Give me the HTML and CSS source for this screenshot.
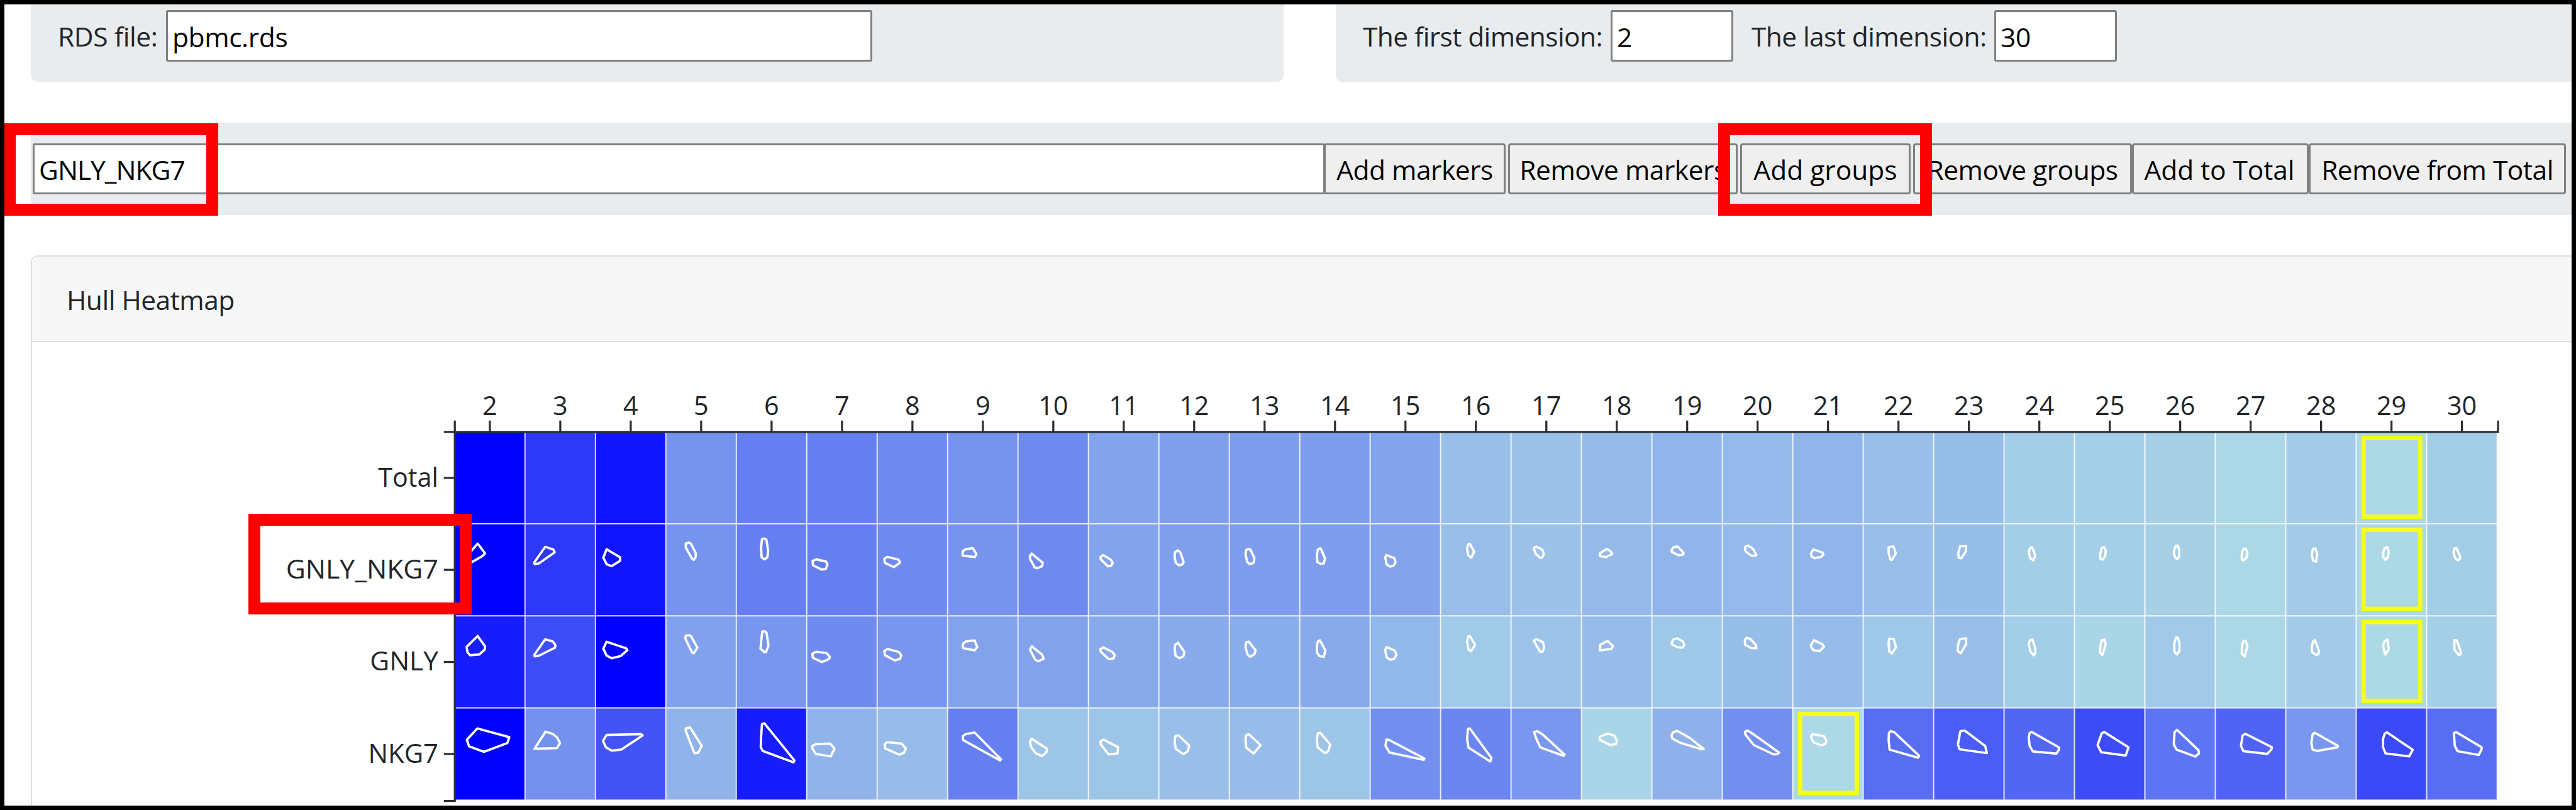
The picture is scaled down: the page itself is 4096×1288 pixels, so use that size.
FILE: index.html
```html
<!DOCTYPE html>
<html lang="en">
<head>
<meta charset="utf-8">
<title>Hull Heatmap</title>
<link rel="stylesheet" href="styles.css">
</head>
<body>
<div class="page">
  <div class="settings">
    <section class="panel panel-file">
      <label class="t-rds" for="rds">RDS file:</label>
      <input class="field field-file" id="rds" value="pbmc.rds">
    </section>
    <section class="panel panel-dims">
      <label class="t-first" for="first">The first dimension:</label>
      <input class="field field-num" id="first" value="2">
      <label class="t-last" for="last">The last dimension:</label>
      <input class="field field-num" id="last" value="30">
    </section>
  </div>

  <div class="toolbar">
    <input class="field field-marker" value="GNLY_NKG7">
    <button class="btn spaced">Add markers</button>
    <button class="btn spaced">Remove markers</button>
    <button class="btn spaced btn-groups">Add groups</button>
    <button class="btn">Remove groups</button>
    <button class="btn btn-total">Add to Total</button>
    <button class="btn">Remove from Total</button>
  </div>

  <section class="card">
    <header class="card-header">Hull Heatmap</header>
    <div class="card-body">
      <svg class="chart" id="chart" viewBox="56 586 4351 795" preserveAspectRatio="none"></svg>
    </div>
  </section>
</div>
<div class="mark mark-input"></div>
<div class="mark mark-button"></div>
<div class="mark mark-row"></div>
<div class="frame"></div>
<script src="chart.js"></script>
</body>
</html>
```
FILE: styles.css
```css
* { box-sizing: border-box; }

body {
  margin: 0;
  width: 4096px;
  height: 1288px;
  overflow: hidden;
  position: relative;
  background: #fff;
  color: #212529;
  font: 42.5px/60px "Open Sans", "Noto Sans", sans-serif;
}

.page {
  display: flex;
  flex-direction: column;
  padding-left: 49px;
}

.settings {
  display: flex;
  height: 130px;
}

.panel {
  display: flex;
  align-items: flex-start;
  padding-top: 16px;
  background: #e9ecef;
  white-space: nowrap;
}

.panel label {
  flex: none;
  padding-top: 12px;
}

.panel-file {
  width: 1992px;
  padding-left: 43px;
  margin-right: 83px;
  border-radius: 0 0 10px 10px;
}

.panel-dims {
  flex: 1;
  padding-left: 43px;
  border-radius: 0 0 0 10px;
}

.t-rds { width: 172px; letter-spacing: -0.4px; }
.t-first { width: 394px; letter-spacing: -0.6px; }
.t-last { width: 386px; margin-left: 29px; letter-spacing: -0.6px; }

.field {
  display: block;
  height: 82px;
  margin: 0;
  padding: 2px 7px 0;
  border: 3px solid #808080;
  border-radius: 3px;
  background: #fff;
  color: #000;
  font: inherit;
  letter-spacing: -0.4px;
  outline: 0;
}

.field-file { width: 1123px; }
.field-num { width: 195px; }

.toolbar {
  display: grid;
  grid-template-columns: 2053px 293px 369px 275px 348px 281px 409px;
  align-items: center;
  height: 147px;
  margin-top: 65px;
  padding: 0 0 0 3px;
  background: #e9ecef;
}

.field-marker {
  width: 2055px;
  height: 81px;
  letter-spacing: -1px;
}

.btn {
  height: 81px;
  margin: 0;
  padding: 3px 0 0;
  border: 3px solid #808080;
  border-radius: 4px;
  background: #efefef;
  color: #000;
  font: inherit;
  letter-spacing: -0.5px;
  white-space: nowrap;
}

.btn-groups { letter-spacing: 0; }
.btn-total { padding-right: 3px; letter-spacing: -0.1px; }
.btn.spaced { margin-right: 4px; }

.card {
  height: 900px;
  margin-top: 64px;
  border: 2px solid #dfdfdf;
  border-right: 0;
  border-radius: 10px 0 0 0;
}

.card-header {
  height: 136px;
  padding: 39px 0 0 55px;
  border-bottom: 2px solid #dfdfdf;
  background: #f7f7f7;
  border-radius: 10px 0 0 0;
  letter-spacing: -0.5px;
}

.chart {
  display: block;
  width: 4038px;
  height: 738px;
}

.chart text {
  font-size: 45.5px;
  fill: #212529;
}

.axis {
  fill: none;
  stroke: #2b2f33;
  stroke-width: 3.5;
}

.cell {
  stroke: #fff;
  stroke-opacity: 0.65;
  stroke-width: 2.2;
}

.hull {
  fill: none;
  stroke: #fff;
  stroke-width: 4;
  stroke-linejoin: round;
}

.best {
  fill: none;
  stroke: #f5ff1e;
  stroke-width: 7.5;
}

.mark {
  position: absolute;
  border: 19px solid #f00;
}

.mark-input { left: 6px; top: 196px; width: 341px; height: 147px; }
.mark-button { left: 2732px; top: 196px; width: 340px; height: 147px; }
.mark-row { left: 395px; top: 817px; width: 355px; height: 160px; }

.frame {
  position: absolute;
  inset: 0;
  border: 7px solid #000;
}
```
FILE: chart.js
```js
const LEFT = 780, TOP = 739.6, CW = 120.67, RH = 157.7;

// Position between blue (0) and light blue (1) for every row and dimension.
const total = [0, .26, .09, .68, .59, .59, .64, .68, .64, .76, .735, .73, .73, .76, .88, .9, .86, .84, .855, .84, .88, .875, .95, .955, .965, .995, .94, 1, .945];
const rows = [
  { name: "Total", width: 103, values: total, best: 27 },
  { name: "GNLY_NKG7", width: 261, values: total, best: 27 },
  { name: "GNLY", width: 117, best: 27, values: [.13, .36, 0, .745, .695, .645, .695, .75, .75, .785, .79, .8, .785, .845, .93, .905, .87, .925, .875, .87, .925, .885, .95, .985, .935, .995, .94, 1, .955] },
  { name: "NKG7", width: 120, best: 19, values: [0, .67, .385, .83, .13, .83, .87, .585, .91, .91, .88, .87, .91, .66, .62, .70, .98, .82, .66, 1, .505, .43, .47, .35, .54, .46, .7, .34, .51] }
];

// Hull outlines, grouped in bands of dimensions that share an origin and a scale.
const bands = [
  { x: 400, k: 1.96, hulls: [
    "822,584 847,620 838,630 797,656 788,652 786,630",
    "1049,596 1076,606 1081,616 1028,657 1014,660 1012,654",
    "1255,605 1301,635 1300,648 1272,667 1256,661 1244,636",
    "822,925 847,963 846,975 828,993 797,996 788,985 785,965",
    "1049,937 1074,945 1083,958 1082,968 1029,997 1014,1000 1012,995",
    "1255,946 1320,970 1325,977 1302,999 1272,1007 1255,997 1244,972",
    "821,1266 928,1298 922,1320 843,1352 793,1332 786,1308",
    "1050,1278 1074,1286 1089,1300 1099,1320 1088,1339 1013,1341",
    "1255,1290 1371,1287 1376,1292 1304,1344 1272,1348 1253,1336 1243,1312" ] },
  { x: 1130, k: 1.96, hulls: [
    "90,584 101,580 108,585 123,618 124,632 117,644 111,639 90,598",
    "346,568 353,565 361,570 367,612 364,635 355,642 345,635 343,600",
    "516,648 528,642 561,650 566,660 561,677 547,680 517,664",
    "757,640 767,633 804,643 810,654 789,671 759,655",
    "1020,612 1030,605 1054,601 1066,622 1061,634 1020,628",
    "1252,621 1289,655 1286,668 1270,675 1262,672 1246,640 1246,630",
    "1482,635 1492,626 1518,644 1524,655 1519,665 1508,668 1484,642",
    "90,924 101,922 108,926 129,968 117,989 111,985 89,935",
    "347,908 354,907 361,912 368,960 359,985 354,984 341,972",
    "515,990 528,983 563,988 574,1002 571,1010 547,1021 517,1005",
    "757,980 768,973 806,984 814,997 809,1010 792,1015 759,996",
    "1020,960 1022,953 1031,945 1060,941 1069,966 1060,978 1022,970",
    "1252,963 1288,995 1292,1009 1275,1018 1264,1013 1246,975",
    "1482,974 1492,967 1523,984 1531,996 1526,1008 1510,1010 1484,983",
    "90,1266 104,1262 144,1330 132,1356 119,1357 90,1275",
    "346,1250 354,1247 455,1384 452,1391 348,1349 342,1335 343,1300",
    "515,1330 527,1324 575,1322 590,1340 577,1369 527,1360 516,1342",
    "758,1324 765,1317 815,1322 829,1340 823,1356 808,1363 760,1340",
    "1020,1295 1030,1287 1060,1281 1149,1380 1145,1384 1022,1309",
    "1252,1304 1303,1341 1302,1352 1287,1368 1266,1358 1250,1335 1246,1315",
    "1482,1315 1493,1307 1542,1335 1540,1358 1510,1362 1484,1325" ] },
  { x: 1860, k: 1.96, hulls: [
    "302,616 312,609 320,616 331,652 327,661 315,664 305,655 301,635",
    "541,608 548,604 556,607 569,638 566,655 553,660 545,652 539,625",
    "782,606 789,601 793,606 806,638 802,657 791,659 780,652 779,625",
    "1012,626 1039,638 1043,652 1037,665 1025,669 1013,661 1008,635",
    "1287,587 1292,584 1307,614 1297,636 1287,627 1283,602",
    "303,957 312,950 334,984 330,1000 318,1007 304,998 301,970",
    "541,948 550,946 573,978 569,992 555,1002 545,992 539,965",
    "782,945 789,941 807,978 802,1002 787,999 779,985 779,960",
    "1012,966 1040,978 1046,995 1038,1009 1026,1013 1013,1004 1008,978",
    "1287,926 1292,925 1310,957 1297,981 1288,975 1283,945",
    "303,1295 313,1291 350,1329 345,1350 331,1361 305,1342 301,1315",
    "541,1291 550,1287 590,1328 566,1358 542,1338 539,1310",
    "782,1284 790,1282 824,1326 816,1351 805,1357 781,1335 779,1305",
    "1012,1307 1020,1308 1140,1377 1137,1382 1023,1355 1009,1330",
    "1286,1268 1292,1266 1365,1375 1361,1388 1288,1337 1283,1305" ] },
  { x: 2590, k: 1.96, hulls: [
    "76,600 85,595 105,607 110,622 105,634 97,637 82,620",
    "298,620 321,604 334,612 340,622 319,634 298,630",
    "539,608 545,598 558,594 573,610 580,620 575,626 562,627 540,615",
    "786,596 795,591 812,603 824,625 821,629 806,628 787,612",
    "1007,620 1015,606 1045,616 1049,625 1040,633 1020,638 1009,632",
    "1268,597 1284,594 1292,620 1279,644 1273,642 1268,618",
    "1508,594 1528,593 1527,613 1512,638 1503,636 1502,618",
    "76,942 85,936 107,948 111,968 106,982 98,984",
    "300,957 324,943 342,962 337,973 298,978",
    "539,950 546,937 558,934 577,945 582,958 575,968 558,966 540,956",
    "785,940 790,932 803,935 822,958 824,970 806,969 786,957",
    "1007,958 1017,941 1045,955 1051,964 1036,981 1015,977 1007,965",
    "1269,935 1285,936 1293,966 1279,989 1270,982 1268,955",
    "1507,937 1528,933 1528,955 1510,989 1500,980 1501,958",
    "77,1280 88,1276 106,1288 180,1363 176,1367 98,1336 85,1305",
    "298,1297 325,1285 346,1292 356,1311 352,1323 334,1328 298,1308",
    "539,1290 545,1279 558,1275 600,1301 647,1342 641,1343 570,1320 541,1303",
    "786,1278 795,1274 812,1286 900,1355 895,1361 882,1362 815,1327 787,1289",
    "1007,1296 1013,1287 1050,1294 1059,1311 1055,1324 1040,1328 1015,1317",
    "1269,1282 1275,1276 1287,1280 1370,1367 1367,1374 1271,1344 1268,1310" ] },
  { x: 3320, k: 1.4333, hulls: [
    "228,601 233,597 241,627 236,646 228,637 225,612",
    "404,600 410,597 414,610 413,628 407,643 401,641 400,625",
    "586,592 591,591 595,610 594,632 590,641 584,635 581,615",
    "751,605 757,602 762,615 760,635 753,646 748,643 748,625",
    "923,603 929,602 933,622 931,651 923,646 920,625",
    "1098,602 1106,597 1109,615 1107,635 1101,644 1096,635 1095,618",
    "1270,603 1275,600 1284,630 1284,641 1278,646 1271,635 1268,615",
    "228,940 234,938 241,970 241,990 237,996 229,982 225,955",
    "404,941 411,938 414,955 406,995 400,987 401,960",
    "586,931 591,930 595,950 595,980 589,993 583,985 582,955",
    "751,945 757,942 762,960 755,1001 748,990 748,970",
    "923,945 928,941 938,980 936,992 931,995 921,985 920,965",
    "1099,944 1106,938 1109,975 1100,993 1097,975 1095,960",
    "1270,940 1276,941 1286,985 1285,993 1281,995 1270,975",
    "57,1276 68,1274 118,1331 122,1357 55,1343 51,1325",
    "227,1283 232,1279 299,1336 299,1345 293,1359 235,1351 227,1330 225,1300",
    "404,1284 410,1279 470,1336 463,1366 403,1354 394,1327",
    "583,1280 589,1271 642,1347 643,1358 634,1370 588,1344 581,1325 582,1300",
    "750,1292 757,1286 822,1335 821,1343 811,1360 752,1350 746,1330",
    "922,1288 927,1282 984,1330 983,1336 933,1349 922,1344 919,1320",
    "1099,1285 1104,1280 1168,1345 1159,1369 1101,1358 1095,1335 1095,1305",
    "1269,1283 1275,1280 1337,1335 1337,1343 1330,1364 1278,1350 1271,1330" ] }
];

const svg = document.getElementById("chart");

function add(tag, attrs, text) {
  const el = document.createElementNS("http://www.w3.org/2000/svg", tag);
  for (const key in attrs) el.setAttribute(key, attrs[key]);
  if (text) el.textContent = text;
  svg.appendChild(el);
}

rows.forEach((row, r) => row.values.forEach((s, c) => add("rect", {
  class: "cell", x: LEFT + c * CW, y: TOP + r * RH, width: CW, height: RH,
  fill: `rgb(${Math.round(173 * s)},${Math.round(216 * s)},${Math.round(255 - 25 * s)})`
})));

rows.forEach((row, r) => add("rect", {
  class: "best", x: LEFT + row.best * CW + 12.5, y: TOP + r * RH + 10.5, width: 97, height: 135
}));

bands.forEach(band => band.hulls.forEach(hull => add("polygon", {
  class: "hull",
  points: hull.split(" ").map(p => {
    const [x, y] = p.split(",").map(Number);
    return `${(band.x + x / band.k).toFixed(1)},${(660 + y / 2.154).toFixed(1)}`;
  }).join(" ")
})));

let path = "M780.3,720.5V740H4281V720.5M761.5,740H780.3V1372H761.5";
rows[0].values.forEach((v, c) => {
  const x = LEFT + (c + .5) * CW;
  path += `M${x},720.5V740`;
  const label = String(c + 2);
  add("text", { x, y: 711.5, "text-anchor": "middle", textLength: label.length * 25.5, lengthAdjust: "spacingAndGlyphs" }, label);
});
rows.forEach((row, r) => {
  const y = TOP + (r + .5) * RH;
  path += `M761.5,${y}H780`;
  add("text", { x: 752 - row.width, y: y + 15, textLength: row.width, lengthAdjust: "spacingAndGlyphs" }, row.name);
});
add("path", { class: "axis", d: path });
```
